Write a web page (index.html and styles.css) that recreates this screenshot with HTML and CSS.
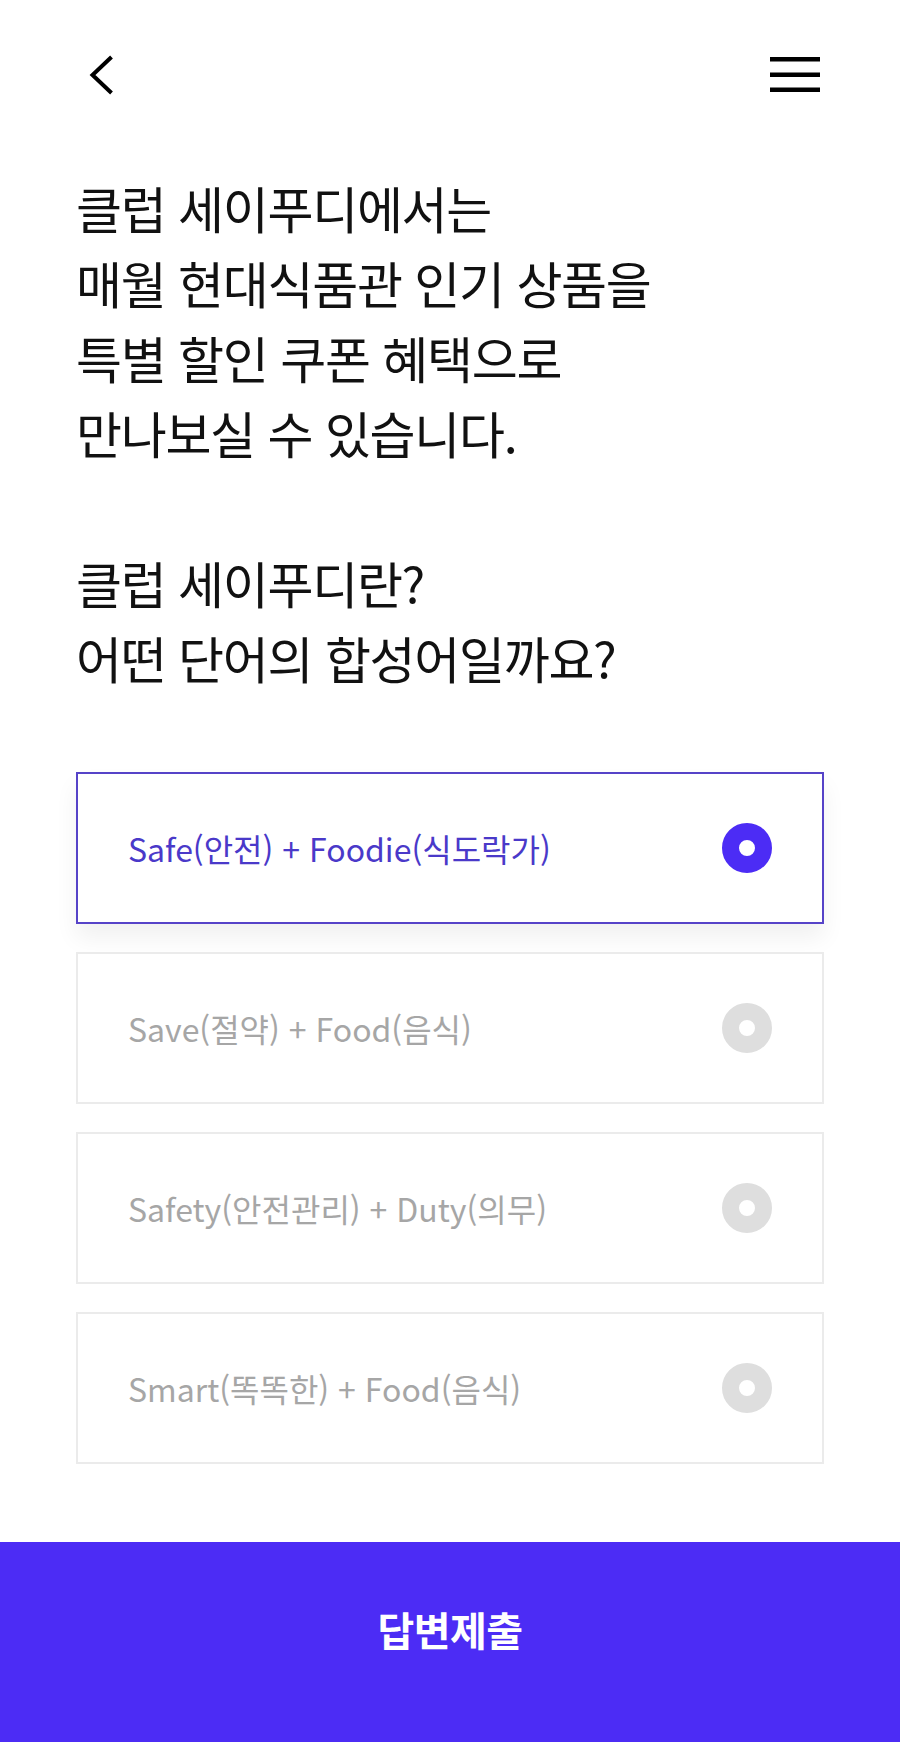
FILE: index.html
```html
<!DOCTYPE html>
<html lang="ko">
<head>
  <meta charset="UTF-8" />
  <meta name="viewport" content="width=device-width, initial-scale=1.0" />
  <title>클럽 세이푸디 퀴즈</title>
  <link rel="stylesheet" href="styles.css">
</head>
<body>
  <header>
    <button class="icon-btn" aria-label="뒤로">
      <svg width="26" height="40" viewBox="0 0 26 40"><path d="M22.5 2 L3.5 20 L22.5 38" fill="none" stroke="#000" stroke-width="4" stroke-linejoin="miter"/></svg>
    </button>
    <button class="icon-btn" aria-label="메뉴">
      <svg width="50" height="40" viewBox="0 0 50 40"><rect x="0" y="2" width="50" height="4.5"/><rect x="0" y="17.5" width="50" height="4.5"/><rect x="0" y="32.5" width="50" height="4.5"/></svg>
    </button>
  </header>
  <main>
    <p class="intro">클럽 세이푸디에서는<br>매월 현대식품관 인기 상품을<br>특별 할인 쿠폰 혜택으로<br>만나보실 수 있습니다.</p>
    <p class="question">클럽 세이푸디란?<br>어떤 단어의 합성어일까요?</p>
    <div class="options">
      <label class="option selected"><span>Safe(안전) + Foodie(식도락가)</span><i class="radio"></i></label>
      <label class="option"><span>Save(절약) + Food(음식)</span><i class="radio"></i></label>
      <label class="option"><span>Safety(안전관리) + Duty(의무)</span><i class="radio"></i></label>
      <label class="option"><span>Smart(똑똑한) + Food(음식)</span><i class="radio"></i></label>
    </div>
  </main>
  <button class="submit">답변제출</button>
</body>
</html>
```

FILE: styles.css
```css
:root {
  --text: #111;
  --point: #4c2cf5;
  --point-line: #5643c8;
  --point-text: #4a39c9;
  --gray-line: #ebebeb;
  --gray-text: #a6a6a6;
  --gray-radio: #dedede;
}
* { box-sizing: border-box; }
html, body {
  margin: 0; padding: 0; width: 100%;
  font-family: "Noto Sans CJK KR", "Noto Sans", sans-serif;
  background: #fff; color: var(--text);
}
body { display: flex; flex-direction: column; min-height: 100vh; }
header {
  height: 150px; display: flex; justify-content: space-between; align-items: center;
  padding: 0 80px 0 89px;
}
.icon-btn { background: none; border: none; padding: 0; line-height: 0; cursor: pointer; }
main { padding: 20px 76px 0; }
.intro, .question {
  margin: 0; font-size: 50px; line-height: 75px; letter-spacing: -1.3px; font-weight: 400;
}
.question { margin-top: 75px; }
.options { display: flex; flex-direction: column; gap: 28px; margin-top: 77px; }
.option {
  height: 152px; display: flex; align-items: center; justify-content: space-between;
  padding: 0 50px 0 50px; border: 2px solid var(--gray-line); background: #fff;
  font-size: 32px; color: var(--gray-text); cursor: pointer;
}
.option.selected {
  border-color: var(--point-line); color: var(--point-text);
  box-shadow: 0 14px 22px rgba(0,0,0,0.06);
}
.radio {
  width: 50px; height: 50px; border-radius: 50%;
  border: 17px solid var(--gray-radio); background: #fff;
}
.option.selected .radio { border-color: var(--point); }
.submit {
  margin-top: auto; width: 100%; height: 200px; padding: 0 0 26px;
  border: none; background: var(--point); color: #fff;
  font-family: inherit; font-size: 40px; font-weight: 700; letter-spacing: -0.5px;
  cursor: pointer;
}
```
